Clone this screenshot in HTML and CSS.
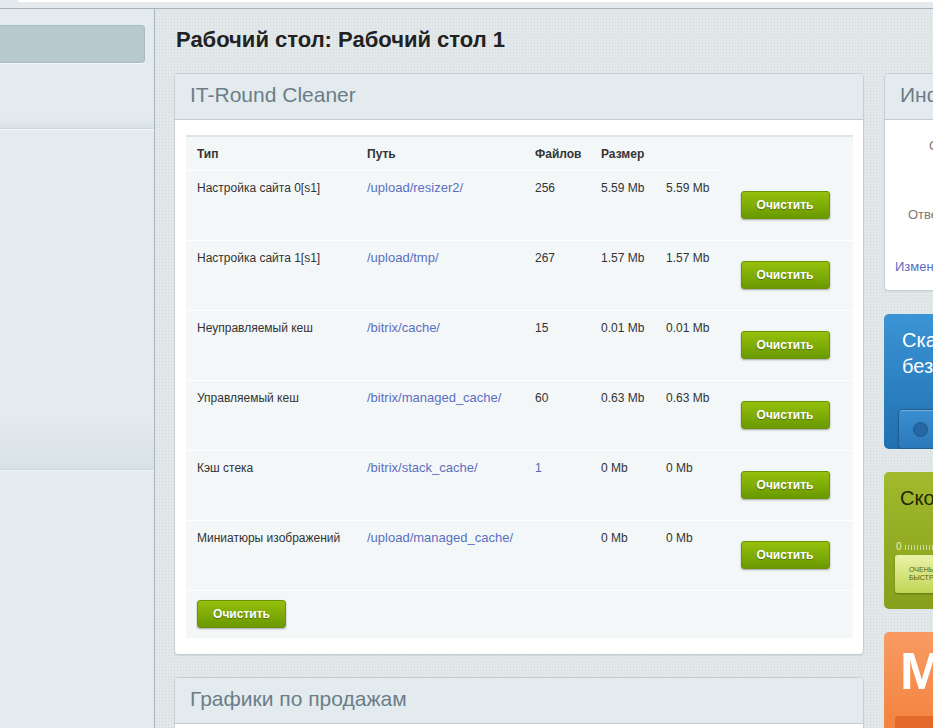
FILE: index.html
```html
<!DOCTYPE html>
<html lang="ru">
<head>
<meta charset="utf-8">
<title>Рабочий стол</title>
<link rel="stylesheet" href="styles.css">
</head>
<body>
<div class="topbar"><div class="topbar-strip"></div></div>
<div class="layout">
  <aside class="sidebar">
    <div class="side-active"></div>
    <div class="side-block side-block-1"></div>
    <div class="side-block side-block-2"></div>
  </aside>
  <main class="main">
    <h1 class="main-title">Рабочий стол: Рабочий стол 1</h1>
    <div class="columns">
      <div class="left-col">
        <section class="card">
          <div class="card-head">IT-Round Cleaner</div>
          <div class="card-body">
            <div class="cleaner">
              <table class="clean-table">
                <colgroup>
                  <col class="c1"><col class="c2"><col class="c3"><col class="c4"><col class="c5"><col class="c6">
                </colgroup>
                <thead>
                  <tr><th>Тип</th><th>Путь</th><th>Файлов</th><th>Размер</th><th></th><th class="th-empty"></th></tr>
                </thead>
                <tbody>
                  <tr><td>Настройка сайта 0[s1]</td><td><a href="#">/upload/resizer2/</a></td><td>256</td><td>5.59 Mb</td><td>5.59 Mb</td><td class="btn-cell"><span class="btn">Очистить</span></td></tr>
                  <tr><td>Настройка сайта 1[s1]</td><td><a href="#">/upload/tmp/</a></td><td>267</td><td>1.57 Mb</td><td>1.57 Mb</td><td class="btn-cell"><span class="btn">Очистить</span></td></tr>
                  <tr><td>Неуправляемый кеш</td><td><a href="#">/bitrix/cache/</a></td><td>15</td><td>0.01 Mb</td><td>0.01 Mb</td><td class="btn-cell"><span class="btn">Очистить</span></td></tr>
                  <tr><td>Управляемый кеш</td><td><a href="#">/bitrix/managed_cache/</a></td><td>60</td><td>0.63 Mb</td><td>0.63 Mb</td><td class="btn-cell"><span class="btn">Очистить</span></td></tr>
                  <tr><td>Кэш стека</td><td><a href="#">/bitrix/stack_cache/</a></td><td class="num-link">1</td><td>0 Mb</td><td>0 Mb</td><td class="btn-cell"><span class="btn">Очистить</span></td></tr>
                  <tr><td>Миниатюры изображений</td><td><a href="#">/upload/managed_cache/</a></td><td></td><td>0 Mb</td><td>0 Mb</td><td class="btn-cell"><span class="btn">Очистить</span></td></tr>
                </tbody>
              </table>
              <div class="cleaner-foot"><span class="btn">Очистить</span></div>
            </div>
          </div>
        </section>
        <section class="card">
          <div class="card-head">Графики по продажам</div>
          <div class="card-body-plain"></div>
        </section>
      </div>
      <div class="right-col">
        <section class="card info-card">
          <div class="card-head">Информация</div>
          <div class="info-body">
            <div class="info-line info-l1">Сайт работает без ошибок</div>
            <div class="info-line info-l2">Ответственный: admin</div>
            <a class="info-link" href="#">Изменить</a>
          </div>
        </section>
        <section class="widget widget-blue">
          <div class="widget-title">Сканер<br>безопасности</div>
          <div class="scan-btn"><span class="scan-dot"></span><span class="scan-text">Запустить</span></div>
        </section>
        <section class="widget widget-green">
          <div class="widget-title dark">Скорость сайта</div>
          <div class="scale"><span class="scale-zero">0</span><span class="ticks"></span></div>
          <div class="speed-box">ОЧЕНЬ<br>БЫСТРО</div>
        </section>
        <section class="widget widget-orange">
          <div class="big-m">MARKETPLACE</div>
          <div class="orange-bar"></div>
        </section>
      </div>
    </div>
  </main>
</div>
</body>
</html>
```
FILE: styles.css
```css
html, body {
  margin: 0;
  padding: 0;
}
body {
  width: 933px;
  height: 728px;
  overflow: hidden;
  font-family: "Liberation Sans", Arial, sans-serif;
  background: #e3e9eb;
  color: #333;
}
.topbar {
  height: 8px;
  background: #e3e9ec;
  border-bottom: 1px solid #a9b4ba;
}
.topbar-strip {
  margin-left: 18px;
  height: 2px;
  background: #ffffff;
}
.layout {
  display: flex;
  height: 719px;
}
.sidebar {
  width: 155px;
  flex: none;
  background: #e4ebee;
  border-right: 1px solid #a6b5bf;
  padding-top: 16px;
  box-sizing: border-box;
}
.side-active {
  width: 145px;
  height: 38px;
  box-sizing: border-box;
  background: #b8cacf;
  border: 1px solid #a9bcc2;
  border-left: none;
  border-radius: 0 4px 4px 0;
  box-shadow: 0 1px 0 #f4f8f9;
}
.side-block {
  border-bottom: 1px solid #cbd7dc;
  box-shadow: 0 1px 0 #f4f7f8;
  background: linear-gradient(to bottom, rgba(0,0,0,0) 85%, #d8e1e5 100%);
}
.side-block-1 {
  height: 65px;
}
.side-block-2 {
  height: 340px;
}
.main {
  flex: 1;
  min-width: 0;
  overflow: hidden;
  padding-left: 19px;
  background-color: #e2e8ea;
  background-image: radial-gradient(circle, #d2dadd 0.7px, transparent 0.9px);
  background-size: 3px 3px;
}
.main-title {
  margin: 0 0 21px 2px;
  padding-top: 19px;
  font-size: 22px;
  line-height: 24px;
  font-weight: bold;
  color: #222;
}
.columns {
  display: flex;
  gap: 20px;
  align-items: flex-start;
}
.left-col {
  width: 690px;
  flex: none;
  display: flex;
  flex-direction: column;
  gap: 22px;
}
.right-col {
  width: 250px;
  flex: none;
  display: flex;
  flex-direction: column;
  gap: 23px;
}
.card {
  background: #fff;
  border: 1px solid #c4cfd4;
  border-radius: 4px;
  box-shadow: 0 1px 1px rgba(0,0,0,0.06);
}
.card-head {
  height: 45px;
  line-height: 42px;
  padding-left: 15px;
  background: #e4ebee;
  border-bottom: 1px solid #c0ccd1;
  border-radius: 4px 4px 0 0;
  font-size: 21px;
  color: #6b7e88;
  white-space: nowrap;
}
.card-body {
  padding: 15px 10px 16px 11px;
}
.card-body-plain {
  height: 60px;
}
.cleaner {
  background: #f4f7f8;
  border-top: 2px solid #dde4e9;
}
.clean-table {
  width: 100%;
  border-collapse: collapse;
  table-layout: fixed;
  font-size: 12px;
}
.c1 { width: 170px; }
.c2 { width: 168px; }
.c3 { width: 66px; }
.c4 { width: 65px; }
.c5 { width: 64px; }
.clean-table th {
  height: 33px;
  padding: 0 0 0 11px;
  text-align: left;
  font-weight: bold;
  color: #333;
  border-bottom: 1px solid #fff;
  vertical-align: middle;
}
.clean-table th.th-empty {
  border-bottom: 1px solid #f4f7f8;
}
.clean-table td {
  height: 59px;
  padding: 10px 0 0 11px;
  vertical-align: top;
  border-bottom: 1px solid #fff;
  line-height: 14px;
  color: #333;
  white-space: nowrap;
}
.clean-table td.btn-cell {
  padding: 0 2px 2px 0;
  vertical-align: middle;
  text-align: center;
}
.clean-table a {
  font-size: 13px;
  color: #5a6fc1;
  text-decoration: none;
}
.clean-table td.num-link {
  color: #4d6bb8;
}
.btn {
  display: inline-block;
  width: 89px;
  height: 28px;
  box-sizing: border-box;
  line-height: 26px;
  text-align: center;
  font-size: 12px;
  font-weight: bold;
  color: #fff;
  background: linear-gradient(to bottom, #95c00c, #6a9901);
  border: 1px solid #6a9406;
  border-radius: 3px;
  box-shadow: 0 1px 2px rgba(0,0,0,0.35);
  text-shadow: 0 1px 1px rgba(0,0,0,0.35);
}
.cleaner-foot {
  padding: 9px 0 10px 11px;
  line-height: 0;
}
.info-card {
  height: 218px;
  box-sizing: border-box;
  overflow: hidden;
}
.info-body {
  height: 170px;
  font-size: 13px;
  white-space: nowrap;
}
.info-line {
  color: #837769;
}
.info-l1 {
  padding: 18px 0 0 44px;
}
.info-l2 {
  padding: 54px 0 0 23px;
}
.info-link {
  display: block;
  padding: 37px 0 0 10px;
  color: #5b6cc4;
  text-decoration: none;
}
.widget {
  border-radius: 5px;
  box-sizing: border-box;
  overflow: hidden;
  white-space: nowrap;
}
.widget-blue {
  height: 135px;
  padding: 13px 0 0 18px;
  background: linear-gradient(to bottom, #3b94d5, #2070b0);
  color: #fff;
}
.widget-title {
  font-size: 20px;
  line-height: 26px;
}
.widget-title.dark {
  color: #1d2604;
}
.scan-btn {
  margin: 30px 0 0 -4px;
  height: 40px;
  width: 220px;
  box-sizing: border-box;
  display: flex;
  align-items: center;
  gap: 10px;
  padding-left: 14px;
  background: linear-gradient(to bottom, #3a8fd1, #2b79ba);
  border: 1px solid #1f5f96;
  border-radius: 4px;
  box-shadow: inset 0 1px 0 rgba(255,255,255,0.3), 0 1px 2px rgba(0,0,0,0.2);
  font-size: 14px;
}
.scan-dot {
  width: 13px;
  height: 13px;
  border-radius: 50%;
  background: #2568a3;
  border: 1px solid #1a5a90;
  flex: none;
}
.widget-green {
  height: 137px;
  padding: 13px 0 0 16px;
  background: linear-gradient(to bottom, #a2b92d, #86a01c);
}
.scale {
  margin: 30px 0 0 -4px;
  height: 12px;
  display: flex;
  align-items: center;
  gap: 3px;
}
.scale-zero {
  font-size: 10px;
  color: #f3f1a8;
  line-height: 12px;
}
.ticks {
  width: 200px;
  height: 5px;
  background-image: repeating-linear-gradient(to right, rgba(255,255,255,0.55) 0 1px, transparent 1px 3px);
}
.speed-box {
  margin: 2px 0 0 -5px;
  height: 38px;
  width: 230px;
  box-sizing: border-box;
  padding: 11px 0 0 14px;
  background: linear-gradient(to bottom, #eaf3a8, #c1d555);
  border-radius: 3px;
  box-shadow: 0 1px 2px rgba(0,0,0,0.3);
  font-size: 7px;
  line-height: 8px;
  color: #4f5e14;
}
.widget-orange {
  height: 120px;
  padding: 14px 0 0 16px;
  background: linear-gradient(to bottom, #f89b63, #f27d37);
}
.big-m {
  font-size: 52px;
  line-height: 50px;
  font-weight: bold;
  color: #fff;
}
.orange-bar {
  margin: 20px 0 0 -5px;
  height: 20px;
  width: 230px;
  background: #e2692a;
  border-radius: 3px;
}
```
